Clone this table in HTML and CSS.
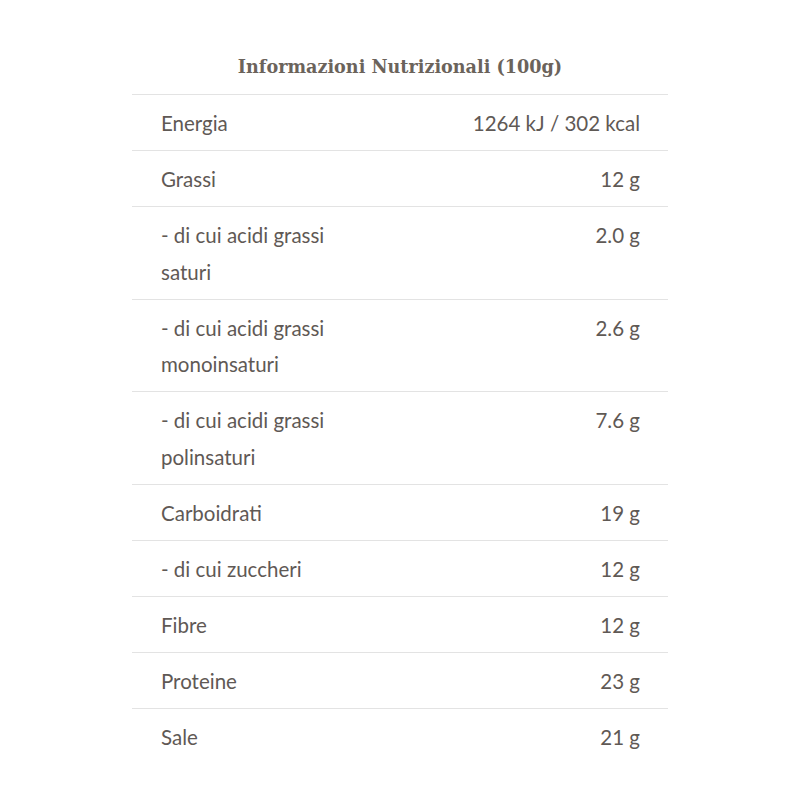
FILE: index.html
```html
<!DOCTYPE html>
<html lang="it">
<head>
<meta charset="utf-8">
<link rel="stylesheet" href="styles.css">
</head>
<body>
<div class="wrap">
  <h2 class="title">Informazioni Nutrizionali (100g)</h2>
  <div class="table">
    <div class="row"><div class="name">Energia</div><div class="val">1264 kJ / 302 kcal</div></div>
    <div class="row"><div class="name">Grassi</div><div class="val">12 g</div></div>
    <div class="row"><div class="name">- di cui acidi grassi saturi</div><div class="val">2.0 g</div></div>
    <div class="row"><div class="name">- di cui acidi grassi monoinsaturi</div><div class="val">2.6 g</div></div>
    <div class="row"><div class="name">- di cui acidi grassi polinsaturi</div><div class="val">7.6 g</div></div>
    <div class="row"><div class="name">Carboidrati</div><div class="val">19 g</div></div>
    <div class="row"><div class="name">- di cui zuccheri</div><div class="val">12 g</div></div>
    <div class="row"><div class="name">Fibre</div><div class="val">12 g</div></div>
    <div class="row"><div class="name">Proteine</div><div class="val">23 g</div></div>
    <div class="row last"><div class="name">Sale</div><div class="val">21 g</div></div>
  </div>
</div>
</body>
</html>
```
FILE: styles.css
```css
html, body { margin: 0; padding: 0; background: #fff; }
.wrap { width: 536px; margin: 0 auto; padding-top: 52px; }
.title {
  margin: 0 0 12px;
  text-align: center;
  font-family: "DejaVu Serif", serif;
  font-weight: bold;
  font-size: 17.6px;
  line-height: 30px;
  color: #6b635b;
}
.table { border-top: 1px solid #e3e3e3; font-family: "Lato", sans-serif; font-size: 20.5px; color: #5f5955; }
.row {
  display: grid;
  grid-template-columns: 205px 1fr;
  padding: 10px 28px 8.3px 29px;
  line-height: 36.7px;
  border-bottom: 1px solid #e3e3e3;
}
.row.last { border-bottom: none; }
.val { text-align: right; }
```
